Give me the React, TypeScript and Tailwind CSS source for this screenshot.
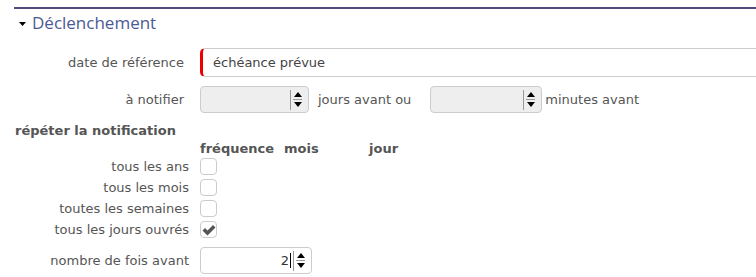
function Spinner() {
  return (
    <div className="flex flex-col items-center justify-center border-l border-[#999] h-[20px] pl-[2px] w-[12px] gap-[3px]">
      <svg width="8" height="5" viewBox="0 0 8 5">
        <path d="M4 0 L8 5 L0 5 Z" fill="#000" />
      </svg>
      <div className="w-[9px] h-px bg-[#999] -my-[1px]" />
      <svg width="8" height="5" viewBox="0 0 8 5">
        <path d="M0 0 L8 0 L4 5 Z" fill="#000" />
      </svg>
    </div>
  )
}

function NumberBox({ width, value, disabled }: { width: string; value?: string; disabled?: boolean }) {
  return (
    <div
      className={`${width} h-[27px] rounded-[4px] border border-[#ccc] flex items-center justify-end pr-[6px] ${
        disabled ? "bg-[#eee]" : "bg-white"
      }`}
    >
      {value && (
        <span className="text-[13px] text-[#333] mr-[2px] border-r border-black pr-px leading-[15px]">{value}</span>
      )}
      <Spinner />
    </div>
  )
}

function Box({ checked }: { checked?: boolean }) {
  return (
    <div className="w-[17px] h-[17px] rounded-[4px] border border-[#ccc] bg-white flex items-center justify-center">
      {checked && (
        <svg width="14" height="12" viewBox="0 0 14 12">
          <path d="M0.5 6.5 L3 4 L5.5 6.5 L11 1 L13.5 3.5 L5.5 11.5 Z" fill="#555" />
        </svg>
      )}
    </div>
  )
}

const repeats = [
  { label: "tous les ans", checked: false },
  { label: "tous les mois", checked: false },
  { label: "toutes les semaines", checked: false },
  { label: "tous les jours ouvrés", checked: true },
]

export default function App() {
  return (
    <div className="w-[756px] h-[277px] bg-white overflow-hidden text-[13px] text-[#555] font-['DejaVu_Sans',sans-serif]">
      <div className="ml-[14px] mt-[7px] border-t-2 border-[#4f4b7d]">
        <div className="flex items-center h-[27px]">
          <svg width="7" height="4" viewBox="0 0 7 4" className="ml-[5px] mr-[6px] mt-[2px]">
            <path d="M0 0 L7 0 L3.5 4 Z" fill="#000" />
          </svg>
          <span className="text-[17px] text-[#4c5a94] font-['Open_Sans',sans-serif]">Déclenchement</span>
        </div>
      </div>

      <div className="grid grid-cols-[200px_1fr] items-center mt-[12px]">
        <div className="text-right pr-[16px]">date de référence</div>
        <div className="h-[29px] border border-[#ccc] border-l-[3px] border-l-[#e00] rounded-l-[5px] border-r-0 flex items-center pl-[10px] text-[#444] w-[560px]">
          échéance prévue
        </div>
      </div>

      <div className="grid grid-cols-[200px_1fr] items-center mt-[9px]">
        <div className="text-right pr-[16px]">à notifier</div>
        <div className="flex items-center">
          <NumberBox width="w-[109px]" disabled />
          <span className="ml-[9px] mr-[19px]">jours avant ou</span>
          <NumberBox width="w-[112px]" disabled />
          <span className="ml-[3px]">minutes avant</span>
        </div>
      </div>

      <div className="font-bold ml-[15px] mt-[9px] leading-[18px]">répéter la notification</div>
      <div className="flex font-bold ml-[200px] leading-[17px]">
        <span className="w-[84px]">fréquence</span>
        <span className="w-[85px]">mois</span>
        <span>jour</span>
      </div>

      <div className="flex flex-col gap-[4px] mt-[1px]">
        {repeats.map((r) => (
          <div key={r.label} className="grid grid-cols-[200px_1fr] items-center">
            <div className="text-right pr-[11px] leading-[17px]">{r.label}</div>
            <Box checked={r.checked} />
          </div>
        ))}
      </div>

      <div className="grid grid-cols-[200px_1fr] items-center mt-[9px]">
        <div className="text-right pr-[11px]">nombre de fois avant</div>
        <NumberBox width="w-[112px]" value="2" />
      </div>
    </div>
  )
}
